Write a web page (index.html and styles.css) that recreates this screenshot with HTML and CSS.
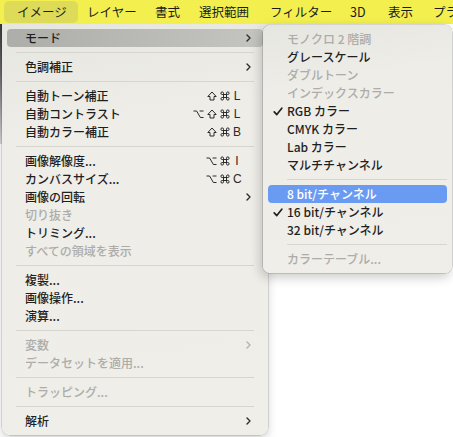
FILE: index.html
```html
<!DOCTYPE html>
<html lang="ja">
<head>
<meta charset="utf-8">
<link rel="stylesheet" href="styles.css">
</head>
<body>
<div class="screen">
  <div class="menubar">
    <span class="mb-item active">イメージ</span>
    <span class="mb-item">レイヤー</span>
    <span class="mb-item">書式</span>
    <span class="mb-item">選択範囲</span>
    <span class="mb-item">フィルター</span>
    <span class="mb-item">3D</span>
    <span class="mb-item">表示</span>
    <span class="mb-item">プラグイン</span>
  </div>
  <div class="desk">
    <div class="edge"></div>
    <div class="menu main">
      <div class="row hl"><span class="label">モード</span><svg class="chev" viewBox="0 0 5 8" width="5" height="8"><path d="M1 1 L4 4 L1 7"/></svg></div>
      <div class="sep"></div>
      <div class="row"><span class="label">色調補正</span><svg class="chev" viewBox="0 0 5 8" width="5" height="8"><path d="M1 1 L4 4 L1 7"/></svg></div>
      <div class="sep"></div>
      <div class="row"><span class="label">自動トーン補正</span><span class="key"><svg class="mod" viewBox="0 0 10 10" width="10" height="10"><path d="M5 1 L9.2 5.5 H7 V9 H3 V5.5 H0.8 Z"/></svg><svg class="mod" viewBox="0 0 10 10" width="10" height="10"><path d="M3.5 3.5 H2.2 A1.3 1.3 0 1 1 3.5 2.2 V7.8 A1.3 1.3 0 1 1 2.2 6.5 H7.8 A1.3 1.3 0 1 1 6.5 7.8 V2.2 A1.3 1.3 0 1 1 7.8 3.5 Z"/></svg><span class="kl">L</span></span></div>
      <div class="row"><span class="label">自動コントラスト</span><span class="key"><svg class="mod" viewBox="0 0 11 10" width="11" height="10"><path d="M0.5 2 H3.6 L7.4 8.5 H10.5 M6.6 2 H10.5"/></svg><svg class="mod" viewBox="0 0 10 10" width="10" height="10"><path d="M5 1 L9.2 5.5 H7 V9 H3 V5.5 H0.8 Z"/></svg><svg class="mod" viewBox="0 0 10 10" width="10" height="10"><path d="M3.5 3.5 H2.2 A1.3 1.3 0 1 1 3.5 2.2 V7.8 A1.3 1.3 0 1 1 2.2 6.5 H7.8 A1.3 1.3 0 1 1 6.5 7.8 V2.2 A1.3 1.3 0 1 1 7.8 3.5 Z"/></svg><span class="kl">L</span></span></div>
      <div class="row"><span class="label">自動カラー補正</span><span class="key"><svg class="mod" viewBox="0 0 10 10" width="10" height="10"><path d="M5 1 L9.2 5.5 H7 V9 H3 V5.5 H0.8 Z"/></svg><svg class="mod" viewBox="0 0 10 10" width="10" height="10"><path d="M3.5 3.5 H2.2 A1.3 1.3 0 1 1 3.5 2.2 V7.8 A1.3 1.3 0 1 1 2.2 6.5 H7.8 A1.3 1.3 0 1 1 6.5 7.8 V2.2 A1.3 1.3 0 1 1 7.8 3.5 Z"/></svg><span class="kl">B</span></span></div>
      <div class="sep"></div>
      <div class="row"><span class="label">画像解像度...</span><span class="key"><svg class="mod" viewBox="0 0 11 10" width="11" height="10"><path d="M0.5 2 H3.6 L7.4 8.5 H10.5 M6.6 2 H10.5"/></svg><svg class="mod" viewBox="0 0 10 10" width="10" height="10"><path d="M3.5 3.5 H2.2 A1.3 1.3 0 1 1 3.5 2.2 V7.8 A1.3 1.3 0 1 1 2.2 6.5 H7.8 A1.3 1.3 0 1 1 6.5 7.8 V2.2 A1.3 1.3 0 1 1 7.8 3.5 Z"/></svg><span class="kl">I</span></span></div>
      <div class="row"><span class="label">カンバスサイズ...</span><span class="key"><svg class="mod" viewBox="0 0 11 10" width="11" height="10"><path d="M0.5 2 H3.6 L7.4 8.5 H10.5 M6.6 2 H10.5"/></svg><svg class="mod" viewBox="0 0 10 10" width="10" height="10"><path d="M3.5 3.5 H2.2 A1.3 1.3 0 1 1 3.5 2.2 V7.8 A1.3 1.3 0 1 1 2.2 6.5 H7.8 A1.3 1.3 0 1 1 6.5 7.8 V2.2 A1.3 1.3 0 1 1 7.8 3.5 Z"/></svg><span class="kl">C</span></span></div>
      <div class="row"><span class="label">画像の回転</span><svg class="chev" viewBox="0 0 5 8" width="5" height="8"><path d="M1 1 L4 4 L1 7"/></svg></div>
      <div class="row off"><span class="label">切り抜き</span></div>
      <div class="row"><span class="label">トリミング...</span></div>
      <div class="row off"><span class="label">すべての領域を表示</span></div>
      <div class="sep"></div>
      <div class="row"><span class="label">複製...</span></div>
      <div class="row"><span class="label">画像操作...</span></div>
      <div class="row"><span class="label">演算...</span></div>
      <div class="sep"></div>
      <div class="row off"><span class="label">変数</span><svg class="chev" viewBox="0 0 5 8" width="5" height="8"><path d="M1 1 L4 4 L1 7"/></svg></div>
      <div class="row off"><span class="label">データセットを適用...</span></div>
      <div class="sep"></div>
      <div class="row off"><span class="label">トラッピング...</span></div>
      <div class="sep"></div>
      <div class="row"><span class="label">解析</span><svg class="chev" viewBox="0 0 5 8" width="5" height="8"><path d="M1 1 L4 4 L1 7"/></svg></div>
    </div>
    <div class="menu sub">
      <div class="row off"><span class="mark"></span><span class="label">モノクロ 2 階調</span></div>
      <div class="row"><span class="mark"></span><span class="label">グレースケール</span></div>
      <div class="row off"><span class="mark"></span><span class="label">ダブルトーン</span></div>
      <div class="row off"><span class="mark"></span><span class="label">インデックスカラー</span></div>
      <div class="row"><span class="mark"><svg viewBox="0 0 10 9" width="10" height="9"><path d="M1.2 4.8 L3.8 7.6 L8.8 1.2"/></svg></span><span class="label">RGB カラー</span></div>
      <div class="row"><span class="mark"></span><span class="label">CMYK カラー</span></div>
      <div class="row"><span class="mark"></span><span class="label">Lab カラー</span></div>
      <div class="row"><span class="mark"></span><span class="label">マルチチャンネル</span></div>
      <div class="sep"></div>
      <div class="row sel"><span class="mark"></span><span class="label">8 bit/チャンネル</span></div>
      <div class="row"><span class="mark"><svg viewBox="0 0 10 9" width="10" height="9"><path d="M1.2 4.8 L3.8 7.6 L8.8 1.2"/></svg></span><span class="label">16 bit/チャンネル</span></div>
      <div class="row"><span class="mark"></span><span class="label">32 bit/チャンネル</span></div>
      <div class="sep"></div>
      <div class="row off"><span class="mark"></span><span class="label">カラーテーブル...</span></div>
    </div>
  </div>
</div>
</body>
</html>
```

FILE: styles.css
```css
* { box-sizing: border-box; }
html, body { margin: 0; padding: 0; }
body {
  width: 453px;
  height: 437px;
  overflow: hidden;
  background: #ffffff;
  font-family: "Noto Sans CJK JP", sans-serif;
  color: #1f1f1f;
}
.screen {
  width: 453px;
  height: 437px;
  display: flex;
  flex-direction: column;
}
.menubar {
  height: 24px;
  flex: none;
  background: #f2ef4f;
  display: grid;
  grid-template-columns: 74px 68px 44px 71px 80px 38px 45px 1fr;
  align-items: stretch;
  padding: 1px 0 0 4px;
  white-space: nowrap;
  overflow: hidden;
  position: relative;
  z-index: 1;
}
.mb-item {
  display: flex;
  align-items: center;
  padding: 0 0 1px 9px;
  font-size: 12.5px;
  color: #1c1c1c;
  border-radius: 5px;
  height: 22px;
  overflow: hidden;
}
.mb-item.active {
  background: #dedb58;
  padding-left: 13px;
}
.desk {
  flex: 1;
  position: relative;
  background: #ffffff;
}
.edge {
  position: absolute;
  left: 0;
  top: 0;
  width: 3px;
  height: 120px;
  background: linear-gradient(#3a3a3a, #6a6a6a 40%, #d8d8d8);
}
.menu {
  position: absolute;
  background: linear-gradient(170deg, #e6e6e1 0%, #eeede8 25%, #efeee9 100%);
  font-size: 12px;
  font-weight: 500;
  padding: 5px 0;
}
.main {
  left: 2px;
  top: 0;
  width: 266px;
  height: 411px;
  border-radius: 0 0 8px 8px;
  box-shadow: 0 0 0 0.5px rgba(0,0,0,0.22), 0 4px 10px rgba(0,0,0,0.18);
}
.sub {
  left: 263px;
  top: 1px;
  width: 189px;
  height: 248px;
  border-radius: 7px;
  box-shadow: 0 0 0 0.5px rgba(0,0,0,0.25), -2px 4px 12px rgba(0,0,0,0.22);
  z-index: 2;
}
.row {
  height: 18px;
  margin: 0 5px;
  display: flex;
  align-items: center;
  border-radius: 4px;
  white-space: nowrap;
  line-height: 18px;
}
.main .row {
  padding: 0 12px 0 18px;
}
.sub .row {
  padding: 0 5px;
}
.label {
  flex: 1;
}
.row.off { color: #adaca8; }
.row.hl {
  background: linear-gradient(to right, #adada9, #c4c4c0);
}
.row.sel {
  background: #6a9bf2;
  color: #ffffff;
}
.chev {
  flex: none;
  fill: none;
  stroke: #2a2a2a;
  stroke-width: 1.4;
  stroke-linecap: round;
  stroke-linejoin: round;
}
.row.off .chev { stroke: #b3b2ae; }
.key {
  display: flex;
  align-items: center;
  gap: 3px;
  margin-right: 10px;
  color: #2a2a2a;
}
.mod {
  flex: none;
  fill: none;
  stroke: #2a2a2a;
  stroke-width: 1;
  stroke-linejoin: round;
}
.kl {
  font-family: "Liberation Sans", sans-serif;
  font-weight: 400;
  font-size: 12px;
  width: 8px;
  text-align: center;
}
.mark {
  width: 14px;
  flex: none;
  display: flex;
  align-items: center;
}
.mark svg {
  fill: none;
  stroke: #222222;
  stroke-width: 1.7;
  stroke-linecap: round;
  stroke-linejoin: round;
}
.sep {
  height: 1px;
  background: #d6d5d0;
  margin: 5px 14px 5px 14px;
}
.sub .sep {
  margin: 5px 5px 5px 24px;
}
```
